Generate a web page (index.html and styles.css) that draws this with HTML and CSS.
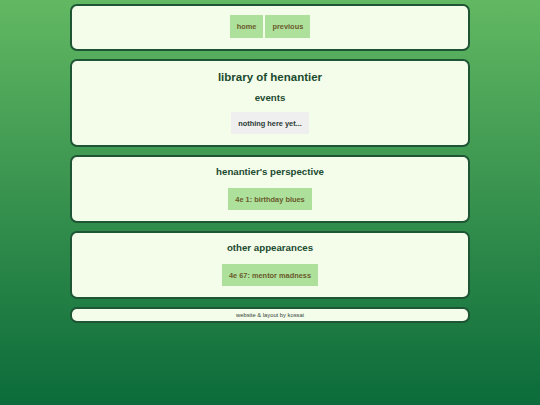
FILE: index.html
```html
<!DOCTYPE html>
<html>
<head>
<meta charset="utf-8">
<link rel="stylesheet" href="styles.css">
</head>
<body>
<div class="page">
  <div class="card">
    <nav class="nav">
      <a class="btn nav-btn" href="#">home</a>
      <a class="btn nav-btn" href="#">previous</a>
    </nav>
  </div>
  <div class="card">
    <h1 class="title">library of henantier</h1>
    <h2 class="heading sub">events</h2>
    <span class="btn empty">nothing here yet...</span>
  </div>
  <div class="card">
    <h2 class="heading">henantier's perspective</h2>
    <a class="btn link" href="#">4e 1: birthday blues</a>
  </div>
  <div class="card">
    <h2 class="heading">other appearances</h2>
    <a class="btn link" href="#">4e 67: mentor madness</a>
  </div>
  <div class="card footer">website &amp; layout by kossai</div>
</div>
</body>
</html>
```

FILE: styles.css
```css
html, body {
  margin: 0;
  padding: 0;
}
body {
  background: linear-gradient(to bottom, #62b862 0%, #0b6b3a 100%);
  min-height: 405px;
  font-family: "Liberation Sans", Arial, sans-serif;
  color: #1b4a30;
}
.page {
  width: 400px;
  margin: 0 auto;
  padding-top: 4px;
  display: flex;
  flex-direction: column;
  gap: 8px;
}
.card {
  box-sizing: border-box;
  background: #f4fde9;
  border: 2px solid #1d5535;
  border-radius: 7px;
  padding: 9px 10px 11px;
  text-align: center;
  display: flex;
  flex-direction: column;
  align-items: center;
}
.nav {
  display: flex;
  gap: 2px;
  justify-content: center;
}
.btn {
  display: inline-flex;
  align-items: center;
  justify-content: center;
  font-size: 7.4px;
  font-weight: bold;
  text-decoration: none;
  height: 22px;
  padding: 0 7px;
}
.nav-btn {
  height: 23px;
  background: #ade19b;
  color: #6a5a2c;
}
.title {
  margin: 0;
  font-size: 11.5px;
  line-height: 14px;
  font-weight: bold;
}
.heading {
  margin: 0;
  font-size: 9.7px;
  line-height: 12px;
  font-weight: bold;
}
.sub {
  margin-top: 8px;
}
.empty {
  margin-top: 8px;
  background: #efefef;
  color: #2b3a33;
}
.link {
  margin-top: 10px;
  background: #ade19b;
  color: #6a5a2c;
}
.footer {
  padding: 0 10px;
  font-size: 5.8px;
  line-height: 12px;
  color: #33433a;
}
```
